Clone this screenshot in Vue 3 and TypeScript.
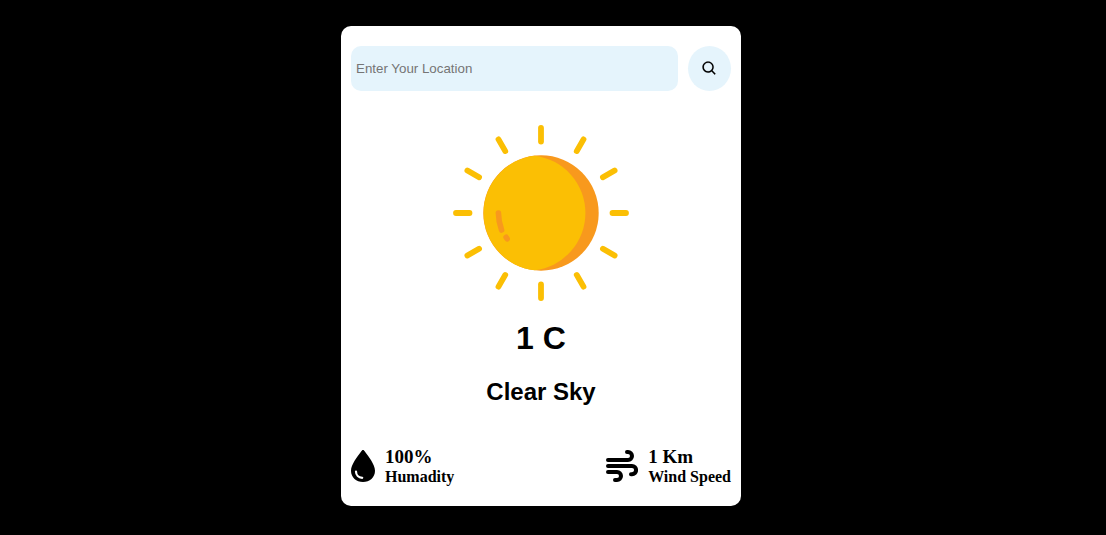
<script setup lang="ts">
import { ref } from 'vue'

const location = ref('')
const temperature = ref(1)
const humidity = ref(100)
const windSpeed = ref(1)
const rayAngles: number[] = Array.from({ length: 12 }, (_, i) => i * 30)
</script>

<template>
  <main class="page">
    <section class="card">
      <form class="search" @submit.prevent>
        <input v-model="location" class="field" type="text" placeholder="Enter Your Location" aria-label="Location" />
        <button class="go" type="submit" aria-label="Search">
          <svg width="17" height="17" viewBox="0 0 24 24" aria-hidden="true">
            <path
              d="M10 18a7.952 7.952 0 0 0 4.897-1.688l4.396 4.396 1.414-1.414-4.396-4.396A7.952 7.952 0 0 0 18 10c0-4.411-3.589-8-8-8s-8 3.589-8 8 3.589 8 8 8zm0-14c3.309 0 6 2.691 6 6s-2.691 6-6 6-6-2.691-6-6 2.691-6 6-6z"
              stroke="#000" stroke-width="0.2"
            />
          </svg>
        </button>
      </form>

      <div class="weather">
        <svg class="sun" viewBox="-90 -90 180 180" aria-hidden="true">
          <g stroke="#fbbf04" stroke-width="5.8" stroke-linecap="round">
            <line v-for="a in rayAngles" :key="a" x1="0" y1="-71.5" x2="0" y2="-85" :transform="`rotate(${a})`" />
          </g>
          <circle r="57.7" fill="#f8991d" />
          <path d="M-6.5 -57.3A57.7 57.7 0 0 0 -6.5 57.3A57.7 57.7 0 0 0 -6.5 -57.3Z" fill="#fbbf04" />
          <g fill="none" stroke="#f8991d" stroke-width="5.6" stroke-linecap="round">
            <path d="M-42.6 0Q-42.4 9 -39.4 17" />
            <path d="M-34.9 24.3L-33.9 25.8" />
          </g>
        </svg>
        <h1 class="temp">{{ temperature }} C</h1>
        <h2 class="sky">Clear Sky</h2>
      </div>

      <div class="details">
        <div class="detail">
          <svg width="24" height="34" viewBox="0 1 24 34" aria-hidden="true">
            <path d="M12 1C11.3 1 10.9 1.5 10.5 2.1C6.5 7.6 0 15.5 0 21.7C0 28.4 5.4 33 12 33S24 28.4 24 21.7C24 15.5 17.5 7.6 13.5 2.1C13.1 1.5 12.7 1 12 1Z" />
            <path d="M5 22.5C5 26 7.7 28.6 11.2 28.8" fill="none" stroke="#fff" stroke-width="2.2" stroke-linecap="round" />
          </svg>
          <div>
            <p class="value">{{ humidity }}%</p>
            <p class="label">Humadity</p>
          </div>
        </div>
        <div class="detail">
          <svg width="33" height="34" viewBox="-1 1 33 34" aria-hidden="true">
            <g fill="none" stroke="#000" stroke-width="4" stroke-linecap="round" stroke-linejoin="round">
              <path d="M2 11H22A4 4 0 0 0 22 3H21" />
              <path d="M2 17H26A4 4 0 0 1 26 25.2H25" />
              <path d="M2 23H11A4 4 0 0 1 11 31H9" />
            </g>
          </svg>
          <div>
            <p class="value">{{ windSpeed }} Km</p>
            <p class="label">Wind Speed</p>
          </div>
        </div>
      </div>
    </section>
  </main>
</template>

<style>
body {
  margin: 0;
  background: #000;
}
</style>

<style scoped>
.page {
  display: flex;
  align-items: center;
  justify-content: center;
  box-sizing: border-box;
  min-height: 100vh;
  padding: 0 24px 3px 0;
  background: #000;
}
.card {
  box-sizing: border-box;
  width: 400px;
  max-width: 100%;
  padding: 20px 10px 19px;
  border-radius: 10px;
  background: #fff;
  color: #000;
  font-family: "Liberation Sans", Arial, sans-serif;
}
.search {
  display: flex;
  gap: 10px;
}
.field {
  box-sizing: border-box;
  flex: 1;
  min-width: 0;
  height: 45px;
  padding: 0 5px;
  border: 0;
  border-radius: 10px;
  background: #e5f4fc;
  font-family: "Liberation Sans", Arial, sans-serif;
}
.field::placeholder {
  color: #757575;
}
.go {
  display: flex;
  align-items: center;
  justify-content: center;
  width: 43px;
  height: 45px;
  padding: 0;
  border: 0;
  border-radius: 50%;
  background: #e5f4fc;
}
.weather {
  display: flex;
  flex-direction: column;
  align-items: center;
  margin-top: 32px;
}
.sun {
  width: 180px;
  height: 180px;
}
.temp {
  margin: 17px 0 0;
  font-size: 32px;
  line-height: 36px;
}
.sky {
  margin: 22px 0 0;
  font-size: 24px;
  line-height: 28px;
}
.details {
  display: flex;
  justify-content: space-between;
  margin-top: 41px;
}
.detail {
  display: flex;
  align-items: center;
  gap: 10px;
  font-family: "Liberation Serif", "Times New Roman", serif;
  font-weight: bold;
}
.value,
.label {
  margin: 0;
  line-height: 20px;
}
.value {
  font-size: 19px;
}
.label {
  font-size: 16px;
}
</style>
